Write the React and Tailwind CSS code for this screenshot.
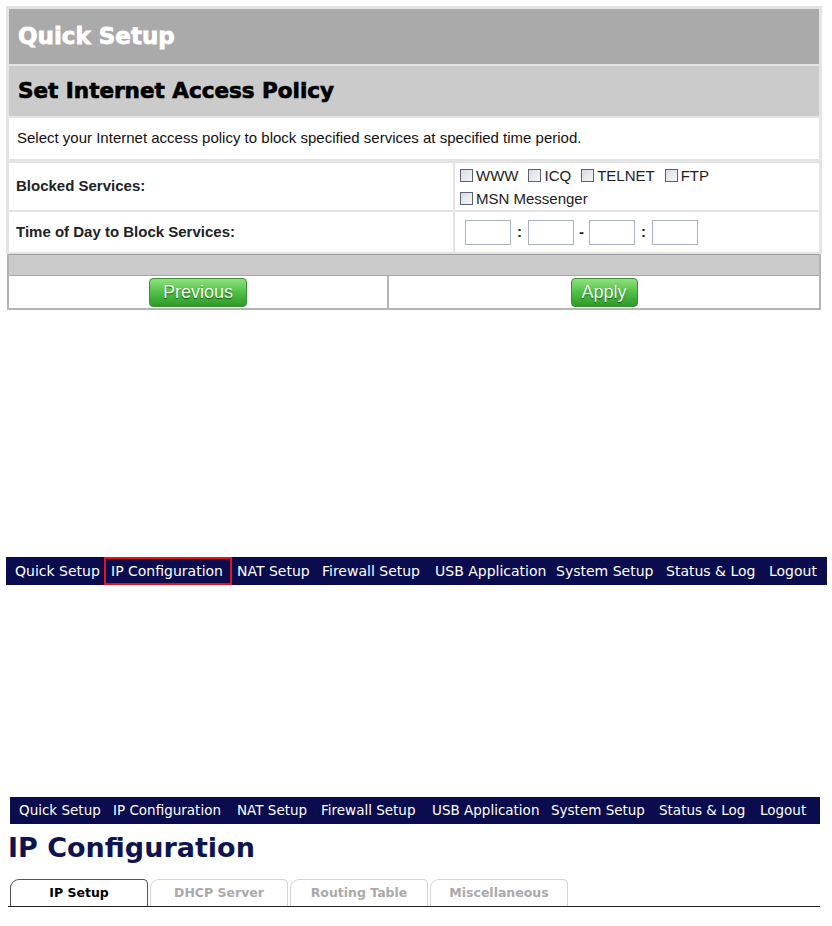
import React from "react";

const navItems = [
  "Quick Setup",
  "IP Configuration",
  "NAT Setup",
  "Firewall Setup",
  "USB Application",
  "System Setup",
  "Status & Log",
  "Logout",
];

// widths of each nav slot, taken from the screenshot
const nav1Widths = ["w-[89px]", "w-[133px]", "w-[85px]", "w-[113px]", "w-[121px]", "w-[110px]", "w-[103px]", "w-[58px]"];
const nav2Widths = ["w-[94px]", "w-[124px]", "w-[84px]", "w-[111px]", "w-[119px]", "w-[108px]", "w-[101px]", "w-[58px]"];

const tabs = ["IP Setup", "DHCP Server", "Routing Table", "Miscellaneous"];

const Checkbox = () => (
  <span className="inline-block w-[13px] h-[13px] border border-[#5a6470] bg-gradient-to-br from-[#d8dde3] to-[#f6f7f9] shrink-0" />
);

const CheckItem = ({ label }) => (
  <span className="flex items-center gap-[3px] mr-[10px]">
    <Checkbox />
    <span>{label}</span>
  </span>
);

const TimeBox = () => (
  <span className="inline-block w-[46px] h-[25px] border border-[#a9b3bf] bg-white" />
);

const GreenButton = ({ children, width }) => (
  <button
    className={`${width} h-[29px] rounded-[4px] border border-[#3d8f35] bg-gradient-to-b from-[#8ee27c] via-[#4fbf45] to-[#2f9a2a] text-[#f4fff2] text-[18px] leading-none [text-shadow:0_1px_1px_rgba(0,60,0,0.8)]`}
    style={{ fontFamily: '"Liberation Sans", Arial, sans-serif' }}
  >
    {children}
  </button>
);

const NavBar = ({ widths, highlight, className, textSize }) => (
  <div
    className={`flex items-center bg-[#0a0c4e] text-white ${textSize} ${className}`}
    style={{ fontFamily: '"DejaVu Sans", Verdana, sans-serif' }}
  >
    {navItems.map((item, i) =>
      highlight && i === 1 ? (
        <span key={item} className={`${widths[i]} shrink-0 flex items-center h-full`}>
          <span className="h-full w-[128px] border-2 border-[#e0161c] flex items-center pl-[5px] whitespace-nowrap">
            {item}
          </span>
        </span>
      ) : (
        <span key={item} className={`${widths[i]} shrink-0 whitespace-nowrap`}>
          {item}
        </span>
      )
    )}
  </div>
);

export default function App() {
  return (
    <div className="w-[832px] h-[926px] bg-white overflow-hidden relative">
      {/* Quick Setup panel */}
      <div
        className="ml-[6px] mt-[6px] w-[816px]"
        style={{ fontFamily: '"Liberation Sans", Arial, sans-serif' }}
      >
        <div className="border-[3px] border-b-2 border-[#e4e4e4] bg-[#e4e4e4] flex flex-col gap-[2px]">
          <div
            className="h-[55px] bg-[#aaaaaa] flex items-center pl-[9px] text-white text-[23px] font-bold [-webkit-text-stroke:0.8px_white]"
            style={{ fontFamily: '"DejaVu Sans", sans-serif' }}
          >
            Quick Setup
          </div>
          <div
            className="h-[50px] bg-[#cbcbcb] flex items-center pl-[9px] text-black text-[21.5px] font-bold [-webkit-text-stroke:0.7px_black]"
            style={{ fontFamily: '"DejaVu Sans", sans-serif' }}
          >
            Set Internet Access Policy
          </div>
          <div className="h-[41px] bg-white flex items-center pl-[8px] text-[15px] text-[#111]">
            Select your Internet access policy to block specified services at specified time period.
          </div>
          <div className="grid grid-cols-[444px_1fr] gap-[2px] mt-[2px]">
            <div className="h-[47px] bg-white flex items-center pl-[7px] text-[15px] font-bold text-[#222]">
              Blocked Services:
            </div>
            <div className="h-[47px] bg-white flex flex-col justify-center gap-[4px] pl-[5px] text-[15px] text-[#222] leading-[19px]">
              <div className="flex items-center">
                <CheckItem label="WWW" />
                <CheckItem label="ICQ" />
                <CheckItem label="TELNET" />
                <CheckItem label="FTP" />
              </div>
              <div className="flex items-center">
                <CheckItem label="MSN Messenger" />
              </div>
            </div>
            <div className="h-[40px] bg-white flex items-center pl-[7px] text-[15px] font-bold text-[#222]">
              Time of Day to Block Services:
            </div>
            <div className="h-[40px] bg-white flex items-center pl-[10px] text-[15px] font-bold text-[#222]">
              <TimeBox />
              <span className="w-[17px] text-center">:</span>
              <TimeBox />
              <span className="w-[15px] text-center">-</span>
              <TimeBox />
              <span className="w-[17px] text-center">:</span>
              <TimeBox />
            </div>
          </div>
        </div>
        <div className="border-2 border-t-0 border-[#b4b4b4] ml-[1px] w-[814px]">
          <div className="h-[22px] bg-[#cbcbcb] border-t border-[#9c9c9c] border-b border-b-[#a8a8a8]" />
          <div className="h-[32px] grid grid-cols-[380px_1fr] bg-white">
            <div className="flex items-center justify-center border-r-2 border-[#b4b4b4]">
              <GreenButton width="w-[98px]">Previous</GreenButton>
            </div>
            <div className="flex items-center justify-center">
              <GreenButton width="w-[67px]">Apply</GreenButton>
            </div>
          </div>
        </div>
      </div>

      {/* Menu with highlighted item */}
      <NavBar
        widths={nav1Widths}
        highlight
        textSize="text-[14px]"
        className="mt-[247px] ml-[6px] w-[821px] h-[28px] pl-[9px]"
      />

      {/* IP Configuration page */}
      <NavBar
        widths={nav2Widths}
        textSize="text-[13.5px]"
        className="mt-[212px] ml-[10px] w-[810px] h-[27px] pl-[9px]"
      />
      <h1
        className="ml-[8px] mt-[5px] text-[27px] leading-[38px] font-bold text-[#0d1450]"
        style={{ fontFamily: '"DejaVu Sans", Verdana, sans-serif' }}
      >
        IP Configuration
      </h1>
      <div
        className="ml-[8px] mt-[12px] w-[812px] flex items-end border-b border-[#222] pl-[2px]"
        style={{ fontFamily: '"DejaVu Sans", Verdana, sans-serif' }}
      >
        {tabs.map((t, i) => (
          <div
            key={t}
            className={`w-[138px] h-[27px] mr-[2px] rounded-tl-[9px] rounded-tr-[5px] border border-b-0 flex items-center justify-center text-[12.5px] font-bold ${
              i === 0 ? "border-[#555] text-black bg-white" : "border-[#d4d4d4] text-[#aaaaaa] bg-white"
            }`}
          >
            {t}
          </div>
        ))}
      </div>
    </div>
  );
}
